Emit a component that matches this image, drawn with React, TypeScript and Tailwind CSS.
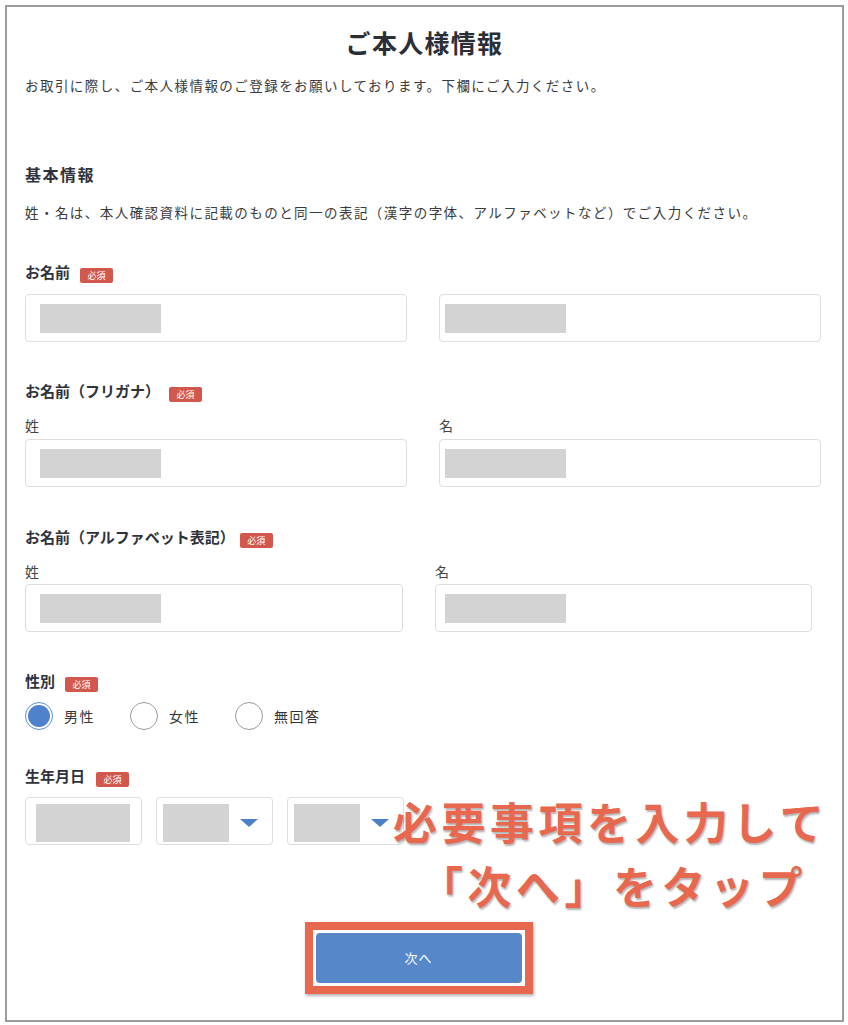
import React from 'react'

const font = { fontFamily: '"Noto Sans CJK JP", "Noto Sans", sans-serif' }

function Badge() {
    return (
        <span className="inline-flex items-center justify-center w-[33px] h-[15px] rounded-[2px] bg-[#d2574d] text-white text-[9px] leading-none">
            必須
        </span>
    )
}

function FieldLabel({ text, gap = 10 }: { text: string; gap?: number }) {
    return (
        <div className="flex items-center h-[22px]">
            <span className="text-[15px] font-bold text-[#2f323a]">{text}</span>
            <span style={{ marginLeft: gap }}>
                <Badge />
            </span>
        </div>
    )
}

function TextBox({ className = '', pad = 'pl-[14px]' }: { className?: string; pad?: string }) {
    return (
        <div className={`h-[48px] rounded-[4px] border border-[#dedede] bg-white pt-[9px] ${pad} ${className}`}>
            <div className="w-[121px] h-[29px] bg-[#d3d3d3]" />
        </div>
    )
}

function SelectBox() {
    return (
        <div className="flex items-center w-[117px] h-[48px] rounded-[4px] border border-[#dedede] bg-white pl-[6px] pt-[6px] pb-[2px]">
            <div className="w-[66px] h-full bg-[#d3d3d3]" />
            <svg className="ml-[11px]" width="18" height="8" viewBox="0 0 18 8">
                <path d="M0 0 H18 L9 8 Z" fill="#4c80c9" />
            </svg>
        </div>
    )
}

function Radio({ label, checked }: { label: string; checked?: boolean }) {
    return (
        <div className="flex items-center">
            {checked ? (
                <span className="w-[28px] h-[28px] rounded-full border border-[#5b8fd6] bg-white flex items-center justify-center">
                    <span className="w-[22px] h-[22px] rounded-full bg-[#4e82cc]" />
                </span>
            ) : (
                <span className="w-[28px] h-[28px] rounded-full border border-[#9b9b9b] bg-white" />
            )}
            <span className="ml-[11px] text-[14px] tracking-[1.5px] text-[#333]">{label}</span>
        </div>
    )
}

export default function App() {
    return (
        <div className="bg-white w-[848px] h-[1025px] pt-[5px] pl-[5px]" style={font}>
            <div className="relative w-[839px] h-[1017px] border-2 border-[#9c9c9c] px-[18px]">
                <h1 className="mt-[18px] h-[34px] leading-[34px] text-center text-[25px] font-bold tracking-[1.3px] text-[#2b2e37]">
                    ご本人様情報
                </h1>
                <p className="mt-[16px] leading-[20px] text-[13.5px] tracking-[1.45px] text-[#3a3a3a]">
                    お取引に際し、ご本人様情報のご登録をお願いしております。下欄にご入力ください。
                </p>

                <h2 className="mt-[67px] leading-[24px] text-[16px] font-bold tracking-[1.5px] text-[#2f323a]">基本情報</h2>
                <p className="mt-[16px] leading-[20px] text-[13.5px] tracking-[1.45px] text-[#3a3a3a]">
                    姓・名は、本人確認資料に記載のものと同一の表記（漢字の字体、アルファベットなど）でご入力ください。
                </p>

                <div className="mt-[39px]">
                    <FieldLabel text="お名前" />
                </div>
                <div className="mt-[11px] flex gap-[32px] w-[796px]">
                    <TextBox className="w-[382px]" />
                    <TextBox className="w-[382px]" pad="pl-[5px]" />
                </div>

                <div className="mt-[38px]">
                    <FieldLabel text="お名前（フリガナ）" gap={9} />
                </div>
                <div className="mt-[13px] flex gap-[32px] w-[796px]">
                    <div className="w-[382px]">
                        <div className="leading-[20px] text-[14px] text-[#444]">姓</div>
                        <TextBox className="mt-[4px]" />
                    </div>
                    <div className="w-[382px]">
                        <div className="leading-[20px] text-[14px] text-[#444]">名</div>
                        <TextBox className="mt-[4px]" pad="pl-[5px]" />
                    </div>
                </div>

                <div className="mt-[39px]">
                    <FieldLabel text="お名前（アルファベット表記）" gap={5} />
                </div>
                <div className="mt-[13px] flex gap-[32px]">
                    <div className="w-[378px]">
                        <div className="leading-[20px] text-[14px] text-[#444]">姓</div>
                        <TextBox className="mt-[3px]" />
                    </div>
                    <div className="w-[377px]">
                        <div className="leading-[20px] text-[14px] text-[#444]">名</div>
                        <TextBox className="mt-[3px]" pad="pl-[9px]" />
                    </div>
                </div>

                <div className="mt-[38px]">
                    <FieldLabel text="性別" gap={10} />
                </div>
                <div className="mt-[10px] flex items-center gap-[35px]">
                    <Radio label="男性" checked />
                    <Radio label="女性" />
                    <Radio label="無回答" />
                </div>

                <div className="mt-[35px]">
                    <FieldLabel text="生年月日" gap={11} />
                </div>
                <div className="mt-[10px] flex gap-[14px]">
                    <div className="w-[117px] h-[48px] rounded-[4px] border border-[#dedede] bg-white pl-[10px] pr-[11px] pt-[6px] pb-[2px]">
                        <div className="w-full h-full bg-[#d3d3d3]" />
                    </div>
                    <SelectBox />
                    <SelectBox />
                </div>

                <div className="mt-[77px] flex justify-center pr-[12px]">
                    <div className="border-[8px] border-[#e8684f] p-[3px] bg-white shadow-[1px_2px_3px_rgba(0,0,0,0.3)]">
                        <button className="w-[206px] h-[50px] rounded-[4px] bg-[#5687c9] text-white text-[13px] tracking-[1px]">
                            次へ
                        </button>
                    </div>
                </div>

                <div className="absolute left-[386px] top-[786px] text-[44px] leading-[56px] font-bold tracking-[4.5px] text-[#e8684f] [text-shadow:1px_2px_2px_rgba(0,0,0,0.3)]">
                    <div>必要事項を入力して</div>
                    <div className="mt-[8px] ml-[26px]">「次へ」をタップ</div>
                </div>
            </div>
        </div>
    )
}
